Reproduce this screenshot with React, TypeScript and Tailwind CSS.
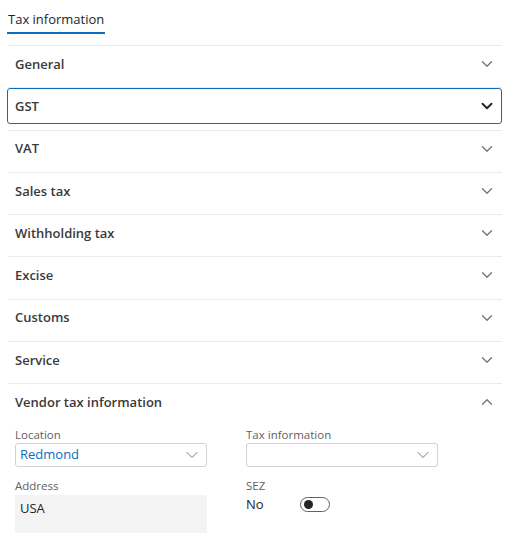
import { ChevronDown, ChevronUp } from "lucide-react";

const sections = ["General", "GST", "VAT", "Sales tax", "Withholding tax", "Excise", "Customs", "Service"];

function Combo({ value }: { value?: string }) {
  return (
    <div className="flex h-[24px] w-[192px] items-center justify-between rounded-[3px] border border-[#d1d1d1] bg-white pl-[4px] pr-[4px]">
      <span className="text-[13px] text-[#0f6cbd]">{value ?? ""}</span>
      <ChevronDown size={20} strokeWidth={1} className="text-[#616161]" />
    </div>
  );
}

export default function App() {
  return (
    <div
      className="h-[533px] w-[512px] overflow-hidden bg-white text-[#242424]"
      style={{ fontFamily: '"Segoe UI", "Open Sans", sans-serif' }}
    >
      <div className="px-[7px] pt-[6px]">
        <div className="inline-block border-b-2 border-[#0f6cbd] px-px pb-[3px] text-[13px] leading-[20px]">
          Tax information
        </div>
      </div>
      <div className="ml-[8px] mr-[10px] mt-[11px]">
        {sections.map((s) => {
          const focused = s === "GST";
          return (
            <div key={s} className="border-t border-[#ebebeb] pb-[5.25px]">
              <div
                className={
                  focused
                    ? "-ml-px flex h-[36px] items-center justify-between rounded-[3px] border border-[#0f6cbd] pl-[7px] pr-[5px]"
                    : "flex h-[36px] items-center justify-between pl-[7px] pr-[6px]"
                }
              >
                <span className="pt-px text-[13px] font-semibold text-[#3a3a3a]">{s}</span>
                <ChevronDown
                  size={18}
                  strokeWidth={focused ? 2.5 : 1.75}
                  className={focused ? "text-[#242424]" : "text-[#757575]"}
                />
              </div>
            </div>
          );
        })}
        <div className="border-t border-[#ebebeb]">
          <div className="flex h-[36px] items-center justify-between pl-[7px] pr-[6px]">
            <span className="pt-px text-[13px] font-semibold text-[#3a3a3a]">Vendor tax information</span>
            <ChevronUp size={18} strokeWidth={1.75} className="text-[#757575]" />
          </div>
          <div className="grid grid-cols-[231px_1fr] pl-[7px] pt-[7px]">
            <div className="flex flex-col">
              <span className="text-[11.5px] leading-[16px] text-[#616161]">Location</span>
              <Combo value="Redmond" />
              <span className="mt-[11px] text-[11.5px] leading-[16px] text-[#616161]">Address</span>
              <div className="mt-[1px] h-[60px] w-[192px] rounded-[2px] bg-[#f3f3f3] px-[5px] pt-[4px] text-[13px]">
                USA
              </div>
            </div>
            <div className="flex flex-col">
              <span className="text-[11.5px] leading-[16px] text-[#616161]">Tax information</span>
              <Combo />
              <span className="mt-[11px] text-[11.5px] leading-[16px] text-[#616161]">SEZ</span>
              <div className="flex items-center pt-[1px]">
                <span className="w-[54px] text-[13px]">No</span>
                <div className="flex h-[15px] w-[30px] items-center rounded-full border border-[#616161] pl-[3px]">
                  <div className="h-[9px] w-[9px] rounded-full bg-[#242424]" />
                </div>
              </div>
            </div>
          </div>
        </div>
      </div>
    </div>
  );
}
